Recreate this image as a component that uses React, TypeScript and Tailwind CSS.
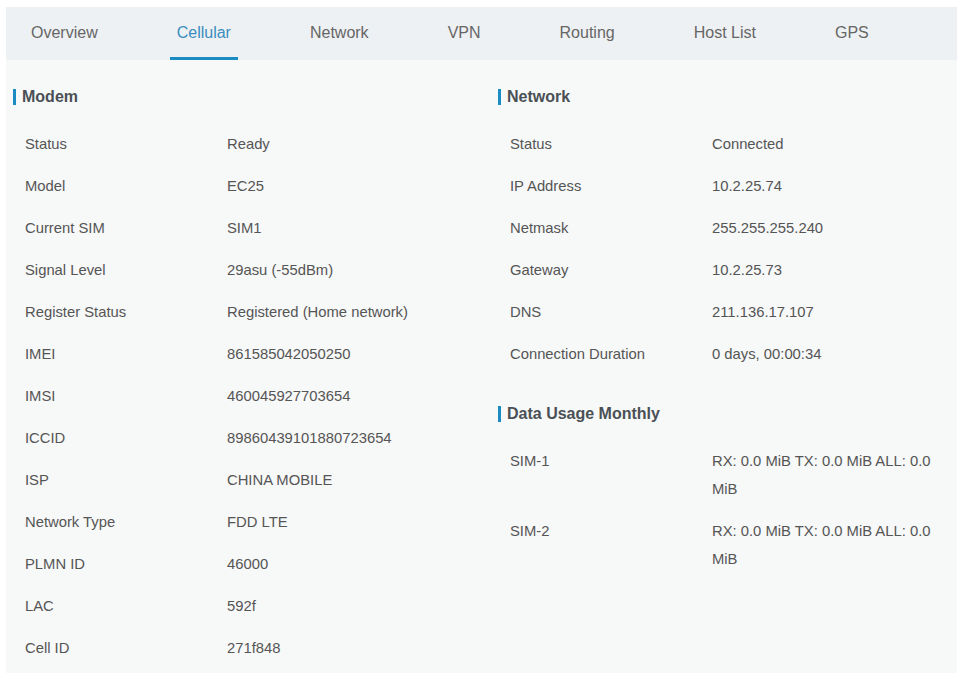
const tabs = ["Overview", "Cellular", "Network", "VPN", "Routing", "Host List", "GPS"];

const modem: [string, string][] = [
  ["Status", "Ready"],
  ["Model", "EC25"],
  ["Current SIM", "SIM1"],
  ["Signal Level", "29asu (-55dBm)"],
  ["Register Status", "Registered (Home network)"],
  ["IMEI", "861585042050250"],
  ["IMSI", "460045927703654"],
  ["ICCID", "89860439101880723654"],
  ["ISP", "CHINA MOBILE"],
  ["Network Type", "FDD LTE"],
  ["PLMN ID", "46000"],
  ["LAC", "592f"],
  ["Cell ID", "271f848"],
];

const network: [string, string][] = [
  ["Status", "Connected"],
  ["IP Address", "10.2.25.74"],
  ["Netmask", "255.255.255.240"],
  ["Gateway", "10.2.25.73"],
  ["DNS", "211.136.17.107"],
  ["Connection Duration", "0 days, 00:00:34"],
];

const usage: [string, string][] = [
  ["SIM-1", "RX: 0.0 MiB TX: 0.0 MiB ALL: 0.0 MiB"],
  ["SIM-2", "RX: 0.0 MiB TX: 0.0 MiB ALL: 0.0 MiB"],
];

function Section({ title, rows }: { title: string; rows: [string, string][] }) {
  return (
    <div>
      <div className="flex items-center h-[16px] mt-[1px]">
        <span className="w-[3px] h-[16px] bg-[#1b8bc4]" />
        <h2 className="ml-[6px] text-[16px] leading-[16px] font-bold text-[#4a5055]">{title}</h2>
      </div>
      <div className="mt-[18px]">
        {rows.map(([label, value]) => (
          <div key={label} className="flex py-[7px] text-[14.8px] leading-[28px] text-[#555]">
            <div className="w-[214px] shrink-0 pl-[12px]">{label}</div>
            <div className="flex-1 pr-[12px]">{value}</div>
          </div>
        ))}
      </div>
    </div>
  );
}

export default function App() {
  return (
    <div
      className="min-h-screen bg-white pt-[7px] px-[6px]"
      style={{ fontFamily: '"Liberation Sans", Arial, sans-serif' }}
    >
      <div className="w-[951px] bg-[#f7f8f8]">
        {/* Tabs */}
        <div className="flex h-[53px] bg-[#eef1f3] pl-[18px] gap-[65px]">
          {tabs.map((t) => (
            <div
              key={t}
              className={
                t === "Cellular"
                  ? "flex items-center h-full px-[7px] border-b-[3px] border-[#1b8bc4] pt-[1px] text-[16px] text-[#3a8dbf]"
                  : "flex items-center h-full px-[7px] border-b-[3px] border-transparent pt-[1px] text-[16px] text-[#666]"
              }
            >
              {t}
            </div>
          ))}
        </div>

        {/* Content */}
        <div className="grid grid-cols-2 gap-x-[33px] px-[7px] pt-[28px] pb-[4px]">
          <Section title="Modem" rows={modem} />
          <div>
            <Section title="Network" rows={network} />
            <div className="mt-[31px]">
              <Section title="Data Usage Monthly" rows={usage} />
            </div>
          </div>
        </div>
      </div>
    </div>
  );
}
